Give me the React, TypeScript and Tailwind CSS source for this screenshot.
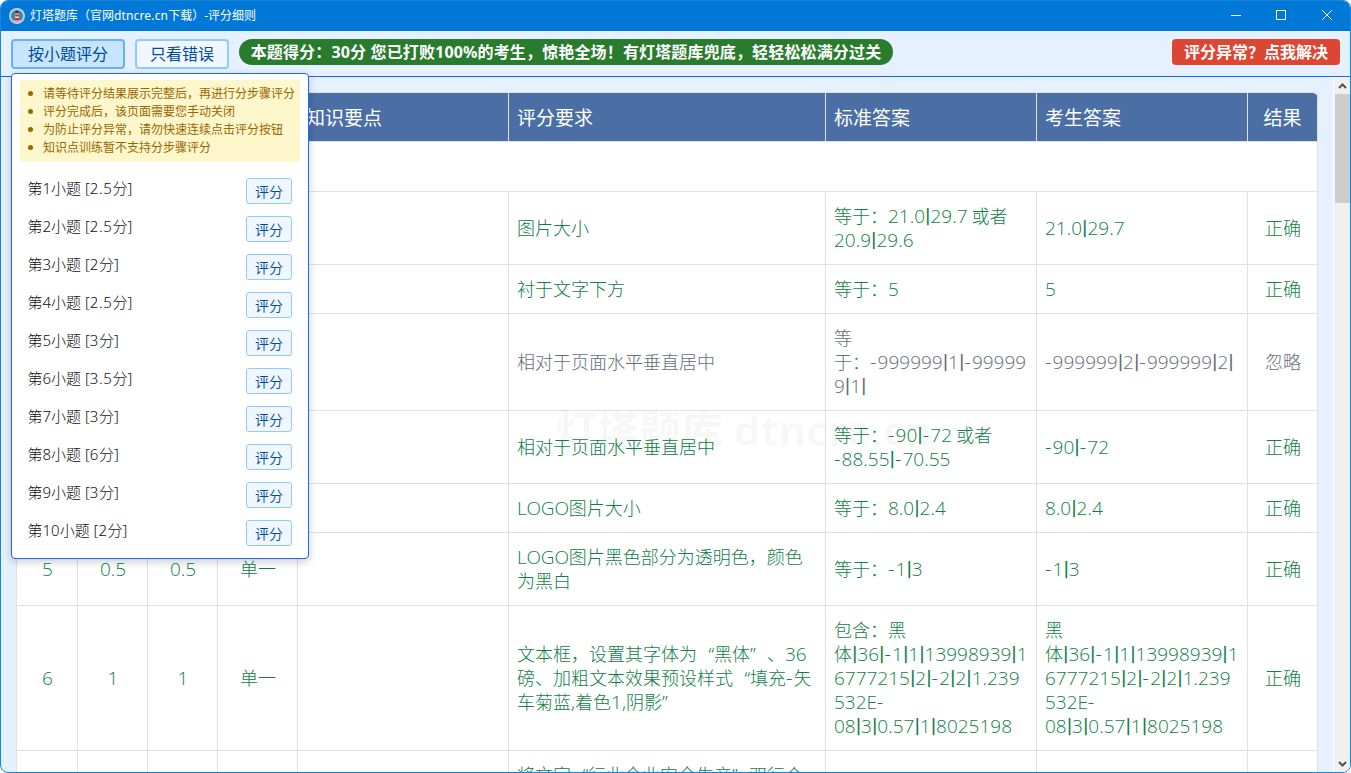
import React from 'react';

const GRID = 'grid grid-cols-[61px_70px_70px_80px_211px_317px_211px_211px_70px]';

function Mixed({ text }: { text: string }) {
  const parts = text.match(/\||[0-9.]+|[A-Za-z]+|-|“|”| |[^|0-9.A-Za-z\-“” ]+/g) ?? [];
  return (
    <>
      {parts.map((p, i) => {
        if (p === '|') return <span key={i} className="inline-block w-[5.400px] text-center font-['Roboto'] text-[20px] leading-none font-medium">|</span>;
        if (p === '-') return <span key={i} className="inline-block w-[7.600px] font-['Open_Sans'] text-[20px] leading-none font-[360]">-</span>;
        if (p === ' ') return <span key={i} className="inline-block w-[4px]"> </span>;
        if (p === '“') return <span key={i} className="inline-block w-[17px] text-right font-light">“</span>;
        if (p === '”') return <span key={i} className="inline-block w-[17px] text-left font-light">”</span>;
        if (/^[0-9.]+$/.test(p)) return <span key={i} className="font-['Open_Sans'] text-[19px] leading-none font-[360]">{p}</span>;
        if (/^[A-Z]+$/.test(p)) return <span key={i} className="font-['Open_Sans'] text-[19px] leading-none font-[360] tracking-[-0.200px]">{p}</span>;
        return <span key={i} className="font-light">{p}</span>;
      })}
    </>
  );
}

function Cell({ lines = [], center = false }: { lines?: string[]; center?: boolean }) {
  return (
    <div
      className={
        center
          ? 'flex flex-col items-center justify-center border-r border-b border-[#dee2e6] pl-px'
          : 'flex flex-col justify-center border-r border-b border-[#dee2e6] pl-[8px]'
      }
    >
      {lines.map((l, i) => (
        <div key={i} className="h-6 leading-6 whitespace-pre">
          <Mixed text={l} />
        </div>
      ))}
    </div>
  );
}

type Row = { h: string; lead?: string[]; req: string[]; std: string[]; ans: string[]; res: string; ignored?: boolean };

const rows: Row[] = [
  { h: 'h-[73px]', req: ['图片大小'], std: ['等于：21.0|29.7 或者', '20.9|29.6'], ans: ['21.0|29.7'], res: '正确' },
  { h: 'h-[49px]', req: ['衬于文字下方'], std: ['等于：5'], ans: ['5'], res: '正确' },
  { h: 'h-[97px]', req: ['相对于页面水平垂直居中'], std: ['等', '于：-999999|1|-99999', '9|1|'], ans: ['-999999|2|-999999|2|'], res: '忽略', ignored: true },
  { h: 'h-[73px]', req: ['相对于页面水平垂直居中'], std: ['等于：-90|-72 或者', '-88.55|-70.55'], ans: ['-90|-72'], res: '正确' },
  { h: 'h-[49px]', req: ['LOGO图片大小'], std: ['等于：8.0|2.4'], ans: ['8.0|2.4'], res: '正确' },
  { h: 'h-[73px]', lead: ['5', '0.5', '0.5', '单一'], req: ['LOGO图片黑色部分为透明色，颜色', '为黑白'], std: ['等于：-1|3'], ans: ['-1|3'], res: '正确' },
  {
    h: 'h-[145px]',
    lead: ['6', '1', '1', '单一'],
    req: ['文本框，设置其字体为“黑体”、36', '磅、加粗文本效果预设样式“填充-矢', '车菊蓝,着色1,阴影”'],
    std: ['包含：黑', '体|36|-1|1|13998939|1', '6777215|2|-2|2|1.239', '532E-', '08|3|0.57|1|8025198'],
    ans: ['黑', '体|36|-1|1|13998939|1', '6777215|2|-2|2|1.239', '532E-', '08|3|0.57|1|8025198'],
    res: '正确',
  },
  { h: 'h-[49px]', req: ['将文字“行业企业安全生产”双行合'], std: [], ans: [], res: '' },
];

const headers = ['', '', '', '', '知识要点', '评分要求', '标准答案', '考生答案', '结果'];

const tips = [
  '请等待评分结果展示完整后，再进行分步骤评分',
  '评分完成后，该页面需要您手动关闭',
  '为防止评分异常，请勿快速连续点击评分按钮',
  '知识点训练暂不支持分步骤评分',
];

const scores = ['2.5', '2.5', '2', '2.5', '3', '3.5', '3', '6', '3', '2'];

function TitleBar() {
  return (
    <div className="flex h-[30px] shrink-0 items-center bg-[#0078d7] pl-2 text-white">
      <svg width="16" height="16" viewBox="0 0 16 16">
        <circle cx="8" cy="8" r="8" fill="#c5ced6" />
        <circle cx="8" cy="8" r="6" fill="#3f86ab" />
        <path d="M4.500 12h7L10 13.500H6z" fill="#dceaf2" />
        <path d="M6.600 5h2.800l.8 7.500H5.800z" fill="#f4f4f4" />
        <path d="M6.400 3h3.200v2.500H6.400z" fill="#343a42" />
        <path d="M6.400 6.500h3.200l.2 2H6.200zM6 10h4l.3 2.500H5.700z" fill="#d8222c" />
      </svg>
      <span className="ml-[5px] text-[12px] leading-none whitespace-nowrap">
        灯塔题库（官网<span className="tracking-[0.150px]">dtncre.cn</span>下载）-评分细则
      </span>
      <div className="ml-auto flex">
        <svg width="138" height="30" viewBox="0 0 138 30" fill="none" stroke="white" shapeRendering="crispEdges">
          <path d="M19 14.5h10" />
          <rect x="64.5" y="9.5" width="9" height="9" />
          <path d="m110.300 9.300 9.400 9.400m0-9.400-9.400 9.400" shapeRendering="auto" />
        </svg>
      </div>
    </div>
  );
}

function Menu() {
  return (
    <div className="absolute top-[73px] left-[11px] z-20 h-[486px] w-[298px] rounded-[4px] border border-[#1a66ff] bg-white px-[8px] pt-[6px] shadow-[0_3px_8px_rgba(0,0,0,0.2)]">
      <ul className="flex h-[82px] w-[280px] flex-col rounded-[3px] bg-[#fff7cc] pt-[5px] text-[12px] text-[#996600]">
        {tips.map((t) => (
          <li key={t} className="flex h-[18px] items-center whitespace-nowrap">
            <span className="-mt-px mr-[10px] ml-[8px] size-[5px] rounded-full bg-[#996600]" />
            {t}
          </li>
        ))}
      </ul>
      <div className="pt-[10px]">
        {scores.map((s, i) => (
          <div key={i} className="flex h-[38px] items-center justify-between pr-[8px] pl-[7.500px]">
            <span className="-mt-[6px] text-[15px] font-light whitespace-pre text-[#111]">
              第{i + 1}小题 [<span className="tracking-[0.600px]">{s}</span>分]
            </span>
            <button className="flex h-[26px] w-[46px] items-center justify-center rounded-[3px] border border-[#91caff] bg-[#f0f7ff] text-[14px] font-[350] text-[#004a9f]">
              评分
            </button>
          </div>
        ))}
      </div>
    </div>
  );
}

export default function App() {
  return (
    <div className="h-[773px] w-[1351px] overflow-hidden bg-white font-['Noto_Sans','Noto_Sans_CJK_SC',sans-serif]">
      <div className="relative flex h-full flex-col overflow-hidden rounded-[8px] border border-[#1a84d9] bg-[#e6f1ff]">
        <TitleBar />
        <div className="flex h-[46px] shrink-0 items-start border-b border-[#1a66ff] px-[10px] pt-[8px]">
          <button className="h-[30px] w-[114px] rounded-[4px] border-2 border-[#69b1ff] bg-[#c7e5ff] text-[16px] leading-[27px] text-[#004a9f]">按小题评分</button>
          <button className="ml-[10px] h-[30px] w-[94px] rounded-[4px] border-2 border-[#91caff] bg-[#f0f7ff] text-[16px] leading-[27px] text-[#004a9f]">只看错误</button>
          <div className="ml-[10px] h-[26px] w-[654px] rounded-full bg-[#297b2d] text-center text-[16px] leading-[26px] font-bold tracking-[0.150px] whitespace-nowrap text-white">
            本题得分：30分 您已打败100%的考生，惊艳全场！有灯塔题库兜底，轻轻松松满分过关
          </div>
          <button className="ml-auto h-[26px] w-[168px] rounded-[4px] bg-[#dd4632] text-center text-[16px] leading-[26px] font-bold whitespace-nowrap text-white">
            评分异常？点我解决
          </button>
        </div>
        <div className="flex min-h-0 flex-1">
          <div className="min-w-0 flex-1 overflow-hidden pt-[15px] pl-[15px]">
            <div className="w-[1302px] overflow-hidden rounded-t-[6px] border-t border-l border-[#dee2e6] bg-white text-[18px] text-[#108048]">
              <div className={`${GRID} h-[49px] bg-[#4b6fa5] text-[19px] text-white`}>
                {headers.map((h, i) => (
                  <div key={i} className={i === 8 ? 'border-r border-b border-[#dee2e6] pt-[2px] text-center leading-[46px]' : 'border-r border-b border-[#dee2e6] pt-[2px] pl-[8px] leading-[46px]'}>
                    {h}
                  </div>
                ))}
              </div>
              <div className="h-[50px] border-r border-b border-[#dee2e6]" />
              {rows.map((r, i) => (
                <div key={i} className={`${GRID} ${r.h} ${r.ignored ? 'text-[#656e78]' : ''}`}>
                  {[0, 1, 2, 3].map((c) => (
                    <Cell key={c} center lines={r.lead ? [r.lead[c]] : []} />
                  ))}
                  <Cell />
                  <Cell lines={r.req} />
                  <Cell lines={r.std} />
                  <Cell lines={r.ans} />
                  <Cell center lines={[r.res]} />
                </div>
              ))}
            </div>
          </div>
          <div className="flex w-[17px] shrink-0 flex-col items-center border-l border-white bg-[#f0f0f0]">
            <svg className="shrink-0" width="15" height="17" viewBox="0 0 15 17" fill="none" stroke="#505050" strokeWidth="2">
              <path d="m4 11 3.500-3.500L11 11" />
            </svg>
            <div className="h-[109px] w-[15px] shrink-0 bg-[#cdcdcd]" />
            <svg className="mt-auto shrink-0" width="15" height="17" viewBox="0 0 15 17" fill="none" stroke="#505050" strokeWidth="2">
              <path d="m4 7 3.500 3.500L11 7" />
            </svg>
          </div>
        </div>
        <div className="pointer-events-none absolute top-[399px] left-[554px] text-[42px] leading-[60px] font-bold whitespace-nowrap text-black/[0.030]">
          <span className="font-black">灯塔题库</span> dtncre.cn
        </div>
      </div>
      <Menu />
    </div>
  );
}
